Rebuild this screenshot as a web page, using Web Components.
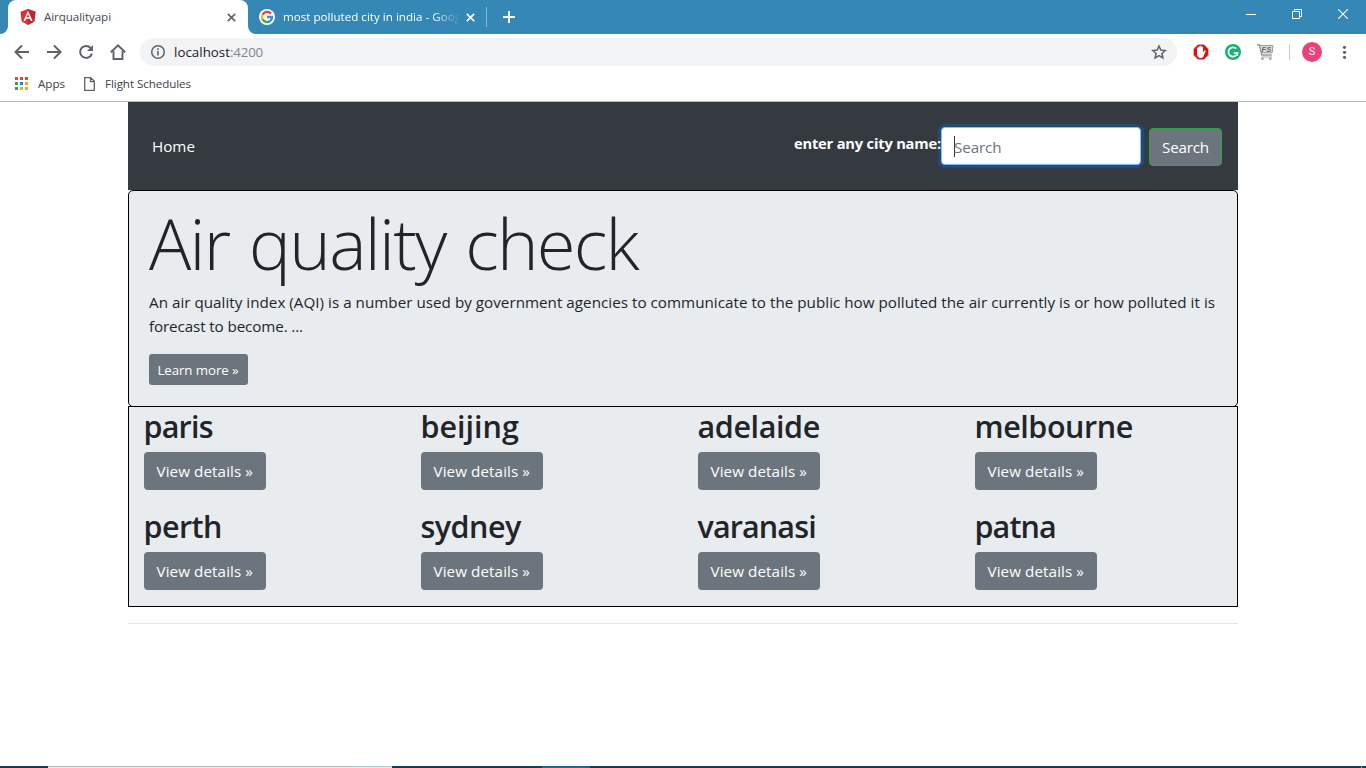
<!DOCTYPE html>
<html lang="en">
<head>
<meta charset="utf-8">
<title>Airqualityapi</title>
<style>
html,body{margin:0;height:100%;overflow:hidden;background:#fff}
body{font-family:"Open Sans","Noto Sans",sans-serif;color:#212529}
</style>
</head>
<body>
<browser-window></browser-window>
<script>
const define = (name, html, after) => customElements.define(name, class extends HTMLElement {
  constructor() {
    super();
    this.attachShadow({ mode: 'open' }).innerHTML = html;
  }
  connectedCallback() { if (after) after(this, this.shadowRoot); }
});

/* Text run whose tracking is tuned so that it occupies the given width. */
define('fit-text', `<style>:host{display:inline-block;white-space:nowrap}span{display:inline-block}</style><span><slot></slot></span>`, (el, root) => {
  const span = root.querySelector('span');
  const target = parseFloat(el.getAttribute('w'));
  const n = [...el.textContent].length;
  const width = span.getBoundingClientRect().width;
  if (target && n) span.style.letterSpacing = ((target - width) / n).toFixed(4) + 'px';
});

define('tab-strip', `<style>
:host{display:flex;height:34px;background:#3587b5;color:#fff;font-size:11.6px;line-height:34px;box-sizing:border-box}
.tab{display:flex;align-items:center;height:34px;box-sizing:border-box}
.edge{width:8px;height:34px;display:flex;align-items:flex-end}
.on{width:240px;background:#fff;color:#45484c;border-radius:8px 8px 0 0;padding:0 12px 0 12px}
.on .t{margin-left:8px;flex:1}
.off{width:230px;padding:0 11px 0 3px;justify-content:flex-start}
.off .t{margin-left:8px;width:178px;-webkit-mask-image:linear-gradient(90deg,#000 150px,transparent 177px);mask-image:linear-gradient(90deg,#000 150px,transparent 177px)}
.off .x{margin-left:auto}
.sep{width:1px;height:20px;background:#86b7d3;margin-top:7px}
.plus{margin:10px 0 0 15px}
.win{margin-left:auto;display:flex;align-items:center;height:28px;padding-right:18px}
svg{display:block;flex:none}
</style>
<div class="edge"><svg width="8" height="8"><path d="M0 8h8V0a8 8 0 0 1-8 8z" fill="#fff"/></svg></div>
<div class="tab on">
<svg width="16" height="16" viewBox="0 0 16 16"><path d="M8 0l7.5 2.7-1.2 9.8L8 16l-6.3-3.5L.5 2.7z" fill="#dd3036"/><path d="M8 0l7.5 2.7-1.2 9.8L8 16z" fill="#b92a30"/><path d="M8 1.8L3.4 12h1.8l.9-2.3h3.8l.9 2.3h1.8zM8 5l1.4 3.3H6.6z" fill="#fff" fill-rule="evenodd"/></svg>
<span class="t"><fit-text w="67">Airqualityapi</fit-text></span>
<svg width="9" height="9"><path d="M.8.8l7.4 7.4M8.2.8L.8 8.2" stroke="#5f6368" stroke-width="1.7"/></svg></div>
<div class="edge"><svg width="8" height="8"><path d="M8 8H0V0a8 8 0 0 0 8 8z" fill="#fff"/></svg></div>
<div class="tab off">
<svg width="16" height="16" viewBox="0 0 16 16"><circle cx="8" cy="8" r="8" fill="#fff"/><g fill="none" stroke-width="2.3"><path d="M12 4.7A5 5 0 0 0 3.6 5.7" stroke="#ea4335"/><path d="M3.6 5.6a5 5 0 0 0 0 4.8" stroke="#fbbc05"/><path d="M3.6 10.3A5 5 0 0 0 11.4 11.8" stroke="#34a853"/><path d="M11.3 11.8A5 5 0 0 0 13 8H8" stroke="#4285f4"/></g></svg>
<span class="t"><fit-text w="178">most polluted city in india - Goog</fit-text></span>
<svg class="x" width="9" height="9"><path d="M.8.8l7.4 7.4M8.2.8L.8 8.2" stroke="#fff" stroke-width="1.7"/></svg></div>
<i class="sep"></i>
<svg class="plus" width="14" height="14"><path d="M1 7h12M7 1v12" stroke="#fff" stroke-width="2"/></svg>
<div class="win">
<svg width="10" height="10"><path d="M0 5.5h10" stroke="#fff"/></svg>
<svg width="10" height="10" style="margin-left:36px"><path d="M.5 2.5h7v7h-7zM2.5 2V.5h7v7H8" fill="none" stroke="#fff"/></svg>
<svg width="10" height="10" style="margin-left:36px"><path d="M0 0l10 10M10 0L0 10" stroke="#fff" stroke-width="1.1"/></svg>
</div>`);

define('tool-bar', `<style>
:host{display:flex;align-items:center;height:36px;background:#fff;padding:0 0 0 14px;box-sizing:border-box;font-size:13.3px;color:#202124}
svg{display:block;flex:none}
.b{margin-right:16px}
.omni{display:flex;align-items:center;width:1037px;height:28px;box-sizing:border-box;background:#f1f3f4;border-radius:14px;padding:0 10px;margin-left:-2px}
.omni .u{margin-left:8px;flex:1}
.port{color:#80868b}
.ext{margin-left:16px}
.div{width:1px;height:16px;background:#ccc;margin:0 12px 0 15px}
.av{width:20px;height:20px;border-radius:50%;background:#ec407a;color:#fff;font:11px/20px Roboto,sans-serif;text-align:center}
</style>
<svg class="b" width="16" height="16"><path d="M15 8H2M8 1.5L1.5 8 8 14.500" fill="none" stroke="#5f6368" stroke-width="2"/></svg>
<svg class="b" width="16" height="16"><path d="M1 8h13M8 1.500L14.500 8 8 14.500" fill="none" stroke="#5f6368" stroke-width="2"/></svg>
<svg class="b" width="16" height="16"><path d="M12.700 4A6 6 0 1 0 13.900 9.600" fill="none" stroke="#5f6368" stroke-width="2"/><path d="M15 1v6H9z" fill="#5f6368"/></svg>
<svg class="b" width="16" height="16"><path d="M.8 8.300L8 1.400l7.200 6.900M3.500 7v8h9V7" fill="none" stroke="#5f6368" stroke-width="1.900"/></svg>
<div class="omni">
<svg width="16" height="16"><circle cx="8" cy="8" r="6.300" fill="none" stroke="#5f6368" stroke-width="1.500"/><path d="M8 7v4.500M8 4.300V6" stroke="#5f6368" stroke-width="1.600"/></svg>
<span class="u"><fit-text w="56">localhost</fit-text><fit-text class="port" w="33">:4200</fit-text></span>
<svg width="16" height="16" viewBox="0 0 16 16"><path d="M8 2l1.800 4.100 4.500.4-3.400 3 1 4.400L8 11.600l-3.900 2.300 1-4.400-3.400-3 4.500-.4z" fill="none" stroke="#5f6368" stroke-width="1.500"/></svg>
</div>
<svg class="ext" width="16" height="16"><path d="M4.700 0h6.600L16 4.700v6.600L11.300 16H4.700L0 11.300V4.700z" fill="#d9d9d9"/><path d="M5 .8h6L15.200 5v6L11 15.200H5L.8 11V5z" fill="#e0120d"/><path d="M4 9V4.200c0-1 1.300-1 1.400 0V2.900c0-1 1.400-1 1.500 0V2.300c.1-.9 1.500-.9 1.600 0v.8c.1-.9 1.500-.9 1.500.1v5l1.200-1.500c.7-.6 1.700-.2 1.400.6l-2 4.600c-.6 1.500-1.400 2.100-2.800 2.100C5.400 14 4 12.200 4 9z" fill="#fff"/></svg>
<svg class="ext" width="16" height="16"><circle cx="8" cy="8" r="8" fill="#18b272"/><path d="M11.300 4.700A4.600 4.600 0 1 0 12.500 9H8.700" fill="none" stroke="#fff" stroke-width="1.700"/><path d="M12.300 8.200v3.800" stroke="#fff" stroke-width="1.600"/></svg>
<svg class="ext" width="17" height="16" viewBox="0 0 17 16"><path d="M0 .8h2.300L4.800 11h10" fill="none" stroke="#999" stroke-width="1.400"/><path d="M2.600 1.500H16l-.8 7.300H4.500z" fill="#ddd" stroke="#999"/><path d="M4.300 13h10.500" stroke="#aaa"/><text x="4.600" y="8" font-family="Liberation Sans" font-size="7.500" font-style="italic" font-weight="bold" fill="#666">FS</text><circle cx="5.500" cy="14.700" r="1.200" fill="#999"/><circle cx="13.300" cy="14.700" r="1.200" fill="#999"/></svg>
<i class="div"></i><div class="av">S</div>
<svg style="margin-left:14px" width="16" height="16"><g fill="#5f6368"><circle cx="8.500" cy="3.300" r="1.600"/><circle cx="8.500" cy="8.300" r="1.600"/><circle cx="8.500" cy="13.300" r="1.600"/></g></svg>`);

define('bookmarks-bar', `<style>
:host{display:flex;align-items:center;height:32px;box-sizing:border-box;border-bottom:1px solid #b6b8ba;background:#fff;padding:0 0 4px 15px;font-size:11.6px;color:#3f4246}
svg{display:block;flex:none}
fit-text{margin:-1px 0 0 10px}
</style>
<svg width="13" height="13"><path d="M0 0h3v3H0zM5 0h3v3H5zM10 0h3v3h-3z" fill="#ea4335"/><path d="M0 5h3v3H0zM0 10h3v3H0z" fill="#34a053"/><path d="M5 5h3v3H5z" fill="#1a83f5"/><path d="M10 5h3v3h-3zM5 10h3v3H5zM10 10h3v3h-3z" fill="#fbab04"/></svg>
<fit-text w="27">Apps</fit-text>
<svg width="11" height="14" style="margin-left:19px"><path d="M.7.7h6L10.300 4.300v9H.7zM6.500.7v4h4" fill="none" stroke="#5f6368" stroke-width="1.300"/></svg>
<fit-text w="86">Flight Schedules</fit-text>`);

define('ui-button', `<style>
:host{display:inline-flex;align-items:center;box-sizing:border-box;height:38px;padding:0 13px 0 12.500px;border-radius:4px;background:#6c757d;color:#fff;font-size:15.2px;line-height:24px;white-space:nowrap}
:host([small]){height:31px;padding:0 9.500px 0 8.500px;border-radius:3px;font-size:13.3px}
:host([success]){border:1px solid #28a745;padding:0 12px}
</style><slot></slot>`);

define('nav-bar', `<style>
:host{display:flex;align-items:center;height:88px;box-sizing:border-box;padding:0 16px 0 24px;background:#343a40;color:#fff;font-size:15.2px}
.home{flex:1}
.label{font-weight:700;font-size:14.700px;margin-top:-6px;position:relative;z-index:1}
.field{display:flex;align-items:center;width:200px;height:38px;box-sizing:border-box;margin:0 8px 0 0;padding-left:12px;background:#fff;border:1px solid #80bdff;border-radius:4px;box-shadow:0 0 0 3.200px #274a73;color:#6c757d}
.field fit-text{margin-top:2px}
.caret{width:1px;height:21px;background:#333;margin-right:-1px}
ui-button{margin-top:2px}
</style>
<fit-text class="home" w="43">Home</fit-text>
<fit-text class="label" w="147">enter any city name:</fit-text>
<div class="field"><i class="caret"></i><fit-text w="47.500">Search</fit-text></div>
<ui-button success><fit-text w="47">Search</fit-text></ui-button>`);

define('hero-panel', `<style>
:host{display:block;height:217px;margin-bottom:-1px;box-sizing:border-box;border:1px solid #000;border-radius:5px;background:#e9ecef;padding:9px 20px}
h1{margin:0;font-weight:300;font-size:70.500px;line-height:86px;height:90px;word-spacing:3px}
p{margin:0 0 16px;font-size:15.200px;line-height:24px}
p fit-text{display:block}
</style>
<h1><fit-text w="489">Air quality check</fit-text></h1>
<p><fit-text w="1066">An air quality index (AQI) is a number used by government agencies to communicate to the public how polluted the air currently is or how polluted it is</fit-text><fit-text w="154">forecast to become. ...</fit-text></p>
<ui-button small><fit-text w="81">Learn more »</fit-text></ui-button>`);

define('city-card', `<style>
:host{display:block;height:100px}
h2{margin:0 0 7px;font-weight:600;font-size:30.500px;line-height:38px}
h2 fit-text{margin-left:-.5px}
</style><h2></h2><ui-button><fit-text w="96.500">View details »</fit-text></ui-button>`, (el, root) => {
  const t = document.createElement('fit-text');
  t.setAttribute('w', parseFloat(el.getAttribute('w')) - 0.7);
  t.textContent = el.getAttribute('name');
  root.querySelector('h2').replaceChildren(t);
});

define('city-grid', `<style>
:host{display:grid;grid-template-columns:repeat(4,277px);height:201px;box-sizing:border-box;border:1px solid #000;background:#e9ecef;padding-left:15px;position:relative;align-content:start}
</style>
<city-card name="paris" w="70"></city-card><city-card name="beijing" w="99"></city-card><city-card name="adelaide" w="123"></city-card><city-card name="melbourne" w="159"></city-card>
<city-card name="perth" w="79"></city-card><city-card name="sydney" w="101"></city-card><city-card name="varanasi" w="119"></city-card><city-card name="patna" w="82"></city-card>`);

define('task-strip', `<style>
:host{display:flex;height:2px;background:#173d56}
i{height:2px}
</style>
<i style="width:48px"></i><i style="width:304px;background:linear-gradient(#b8b8b8 50%,#f0f0f0 50%)"></i><i style="width:40px;background:linear-gradient(#bcc8d0 50%,#e6eef4 50%)"></i><i style="width:150px"></i><i style="width:48px;background:#1d6a96"></i><i style="width:1px;margin-left:771px;background:#7f97a6"></i>`);

define('browser-window', `<style>
:host{display:flex;flex-direction:column;width:1366px;height:768px;background:#fff}
main{flex:1;width:1110px;margin:0 auto}
hr{margin:16px 0 0;border:0;border-top:1px solid rgba(0,0,0,.1)}
</style>
<tab-strip></tab-strip><tool-bar></tool-bar><bookmarks-bar></bookmarks-bar>
<main><nav-bar></nav-bar><hero-panel></hero-panel><city-grid></city-grid><hr></main>
<task-strip></task-strip>`);
</script>
</body>
</html>
